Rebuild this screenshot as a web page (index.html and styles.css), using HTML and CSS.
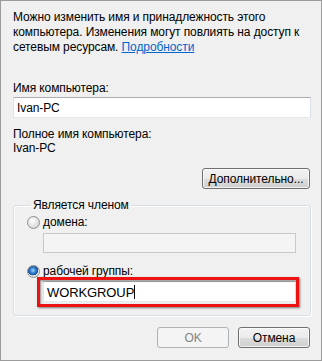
FILE: index.html
```html
<!DOCTYPE html>
<html lang="ru">
<head>
    <meta charset="UTF-8">
    <meta name="viewport" content="width=device-width, initial-scale=1.0">
    <title>Изменение имени компьютера</title>
    <link rel="stylesheet" href="styles.css">
</head>
<body>
<div class="dialog">
    <p class="intro">
        Можно изменить имя и принадлежность этого<br>
        компьютера. Изменения могут повлиять на доступ к<br>
        сетевым ресурсам. <a href="#">Подробности</a>
    </p>

    <label class="caption" for="pc-name">Имя компьютера:</label>
    <div class="textbox" id="pc-name">Ivan-PC</div>

    <div class="caption full-name">Полное имя компьютера:</div>
    <div class="caption">Ivan-PC</div>

    <div class="more-row">
        <button class="btn more">Дополнительно...</button>
    </div>

    <fieldset class="member">
        <legend>Является членом</legend>

        <div class="radio-row">
            <span class="radio"></span>
            <span>домена:</span>
        </div>
        <div class="textbox disabled"></div>

        <div class="radio-row second">
            <span class="radio checked"></span>
            <span>рабочей группы:</span>
        </div>
        <div class="textbox workgroup">WORKGROUP<span class="caret"></span>
            <div class="highlight"></div>
        </div>
    </fieldset>

    <div class="actions">
        <button class="btn" disabled>OK</button>
        <button class="btn">Отмена</button>
    </div>
</div>
</body>
</html>
```

FILE: styles.css
```css
body {
    margin: 0;
    font-family: "Liberation Sans", Arial, sans-serif;
    font-size: 12px;
    letter-spacing: -0.1px;
    color: #000;
}

.dialog {
    width: 322px;
    height: 361px;
    box-sizing: border-box;
    border: 1px solid #9c9c9c;
    background: #f0f0f0;
    padding: 9px 10px 0 12px;
    display: flex;
    flex-direction: column;
}

.intro {
    margin: 0;
    line-height: 15px;
}

.intro a {
    color: #0066cc;
}

.caption {
    display: block;
    line-height: 14px;
}

label.caption {
    margin-top: 26px;
}

.full-name {
    margin-top: 9px;
}

.textbox {
    position: relative;
    height: 21px;
    box-sizing: border-box;
    margin-top: 2px;
    padding: 3px 3px 0;
    background: #fff;
    border: 1px solid #abadb3;
    border-color: #abadb3 #dbdfe6 #e3e9ef #e2e3ea;
    line-height: 14px;
}

.more-row {
    display: flex;
    justify-content: flex-end;
    margin-top: 13px;
}

.btn {
    font-family: inherit;
    font-size: 12px;
    letter-spacing: -0.1px;
    color: #000;
    height: 21px;
    padding: 0;
    border: 1px solid #707070;
    border-radius: 3px;
    background: linear-gradient(#f2f2f2 0%, #ebebeb 50%, #dddddd 51%, #cfcfcf 100%);
    box-shadow: inset 0 0 0 1px rgba(255, 255, 255, 0.7);
}

.btn:disabled {
    color: #838383;
    border-color: #adb2b5;
    background: #f4f4f4;
    box-shadow: none;
}

.more {
    width: 108px;
    margin-right: 1px;
}

.member {
    margin: 9px 0 0;
    padding: 3px 14px 13px 13px;
    border: 1px solid #d5dfe5;
    border-radius: 3px;
    box-shadow: inset 1px 1px 0 #fff, 1px 1px 0 #fff;
}

.member legend {
    padding: 0 2px;
    margin-left: 4px;
    line-height: 14px;
}

.radio-row {
    display: flex;
    align-items: center;
    gap: 3px;
    height: 14px;
}

.radio-row.second {
    margin-top: 11px;
}

.radio {
    width: 11px;
    height: 11px;
    border-radius: 50%;
    border: 1px solid #8e8f8f;
    background: radial-gradient(circle at 40% 35%, #ffffff 0%, #e6e6e6 45%, #cfcfcf 100%);
}

.radio.checked {
    background:
        radial-gradient(circle at 45% 40%, #9bd5ff 0%, #2b75c9 35%, #1b4f96 55%, transparent 58%),
        radial-gradient(circle at 40% 35%, #ffffff 0%, #e6e6e6 60%, #cfcfcf 100%);
}

.member .textbox {
    margin-left: 16px;
    margin-top: 4px;
}

.textbox.disabled {
    height: 20px;
    background: #f4f4f4;
    border-color: #c9c9c9;
}

.member .textbox.workgroup {
    margin-top: 3px;
    padding-top: 3px;
    font-size: 13px;
}

.caret {
    display: inline-block;
    width: 1px;
    height: 14px;
    background: #000;
    vertical-align: -2px;
}

.highlight {
    position: absolute;
    left: -7px;
    top: -5px;
    right: -4px;
    bottom: -6px;
    border: 3px solid #ee1111;
    box-shadow: 1px 1px 2px rgba(0, 0, 0, 0.5), inset 1px 1px 2px rgba(0, 0, 0, 0.4);
}

.actions {
    display: flex;
    justify-content: flex-end;
    gap: 9px;
    margin-top: 11px;
}

.actions .btn {
    width: 72px;
    margin-right: 1px;
}

.actions .btn:first-child {
    margin-right: 0;
}
```
